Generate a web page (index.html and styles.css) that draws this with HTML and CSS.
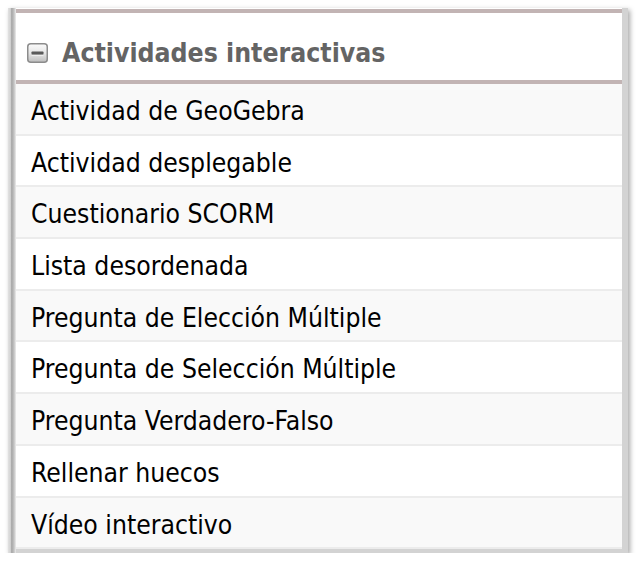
FILE: index.html
```html
<!DOCTYPE html>
<html lang="es">
<head>
<meta charset="utf-8">
<title>Actividades interactivas</title>
<link rel="stylesheet" href="styles.css">
</head>
<body>
<div class="panel">
  <div class="strip"></div>
  <div class="content">
    <div class="header">
      <svg class="toggle" width="21" height="20" viewBox="0 0 21 20" aria-hidden="true">
        <defs>
          <linearGradient id="g" x1="0" y1="0" x2="0" y2="1">
            <stop offset="0" stop-color="#fbfbfb"/>
            <stop offset="0.5" stop-color="#e6e6e6"/>
            <stop offset="1" stop-color="#bdbdbd"/>
          </linearGradient>
        </defs>
        <rect x="0.75" y="0.75" width="19.5" height="18.5" rx="3" ry="3" fill="url(#g)" stroke="#8c8c8c" stroke-width="1.5"/>
        <rect x="4.5" y="8.5" width="12" height="3.2" rx="0.8" fill="#5a5a5a"/>
        <rect x="4.5" y="11.7" width="12" height="1" fill="#ffffff" opacity="0.7"/>
      </svg>
      <span class="title">Actividades interactivas</span>
    </div>
    <ul class="list">
      <li class="item">Actividad de GeoGebra</li>
      <li class="item">Actividad desplegable</li>
      <li class="item">Cuestionario SCORM</li>
      <li class="item">Lista desordenada</li>
      <li class="item">Pregunta de Elección Múltiple</li>
      <li class="item">Pregunta de Selección Múltiple</li>
      <li class="item">Pregunta Verdadero-Falso</li>
      <li class="item">Rellenar huecos</li>
      <li class="item">Vídeo interactivo</li>
    </ul>
  </div>
</div>
</body>
</html>
```
FILE: styles.css
```css
html, body {
  margin: 0;
  padding: 0;
  background: #ffffff;
}

body {
  font-family: "DejaVu Sans Condensed", "DejaVu Sans", Verdana, sans-serif;
  font-stretch: condensed;
}

.panel {
  display: flex;
  width: 620px;
  margin: 8px 0 0 8px;
  box-shadow: 2px 2px 5px rgba(0, 0, 0, 0.35);
  background: #ffffff;
}

.strip {
  width: 8px;
  flex: none;
  background: linear-gradient(to right, #e2e2e2 0%, #d4d4d4 30%, #a8a8a8 45%, #b4b4b4 62%, #d2d2d2 85%, #eeeeee 100%);
}

.content {
  flex: 1;
  border-right: 6px solid #d3d3d3;
  border-bottom: 4px solid #d3d3d3;
  padding-top: 1px;
}

.header {
  display: flex;
  align-items: center;
  border-top: 4px solid #c2b4b4;
  border-bottom: 4px solid #c2b4b4;
  padding: 25px 0 12px 11px;
  background: #ffffff;
}

.toggle {
  flex: none;
  margin-right: 14px;
}

.title {
  font-weight: bold;
  font-size: 26.4px;
  line-height: 30px;
  color: #646464;
}

.list {
  list-style: none;
  margin: 0;
  padding: 0;
}

.item {
  box-sizing: border-box;
  height: 51.7px;
  padding: 12px 0 0 15px;
  margin: 0;
  font-size: 26.3px;
  line-height: 30px;
  color: #000000;
  border-bottom: 2px solid #ececec;
  background: #f9f9f9;
}

.item:nth-child(even) {
  background: #ffffff;
}
```
